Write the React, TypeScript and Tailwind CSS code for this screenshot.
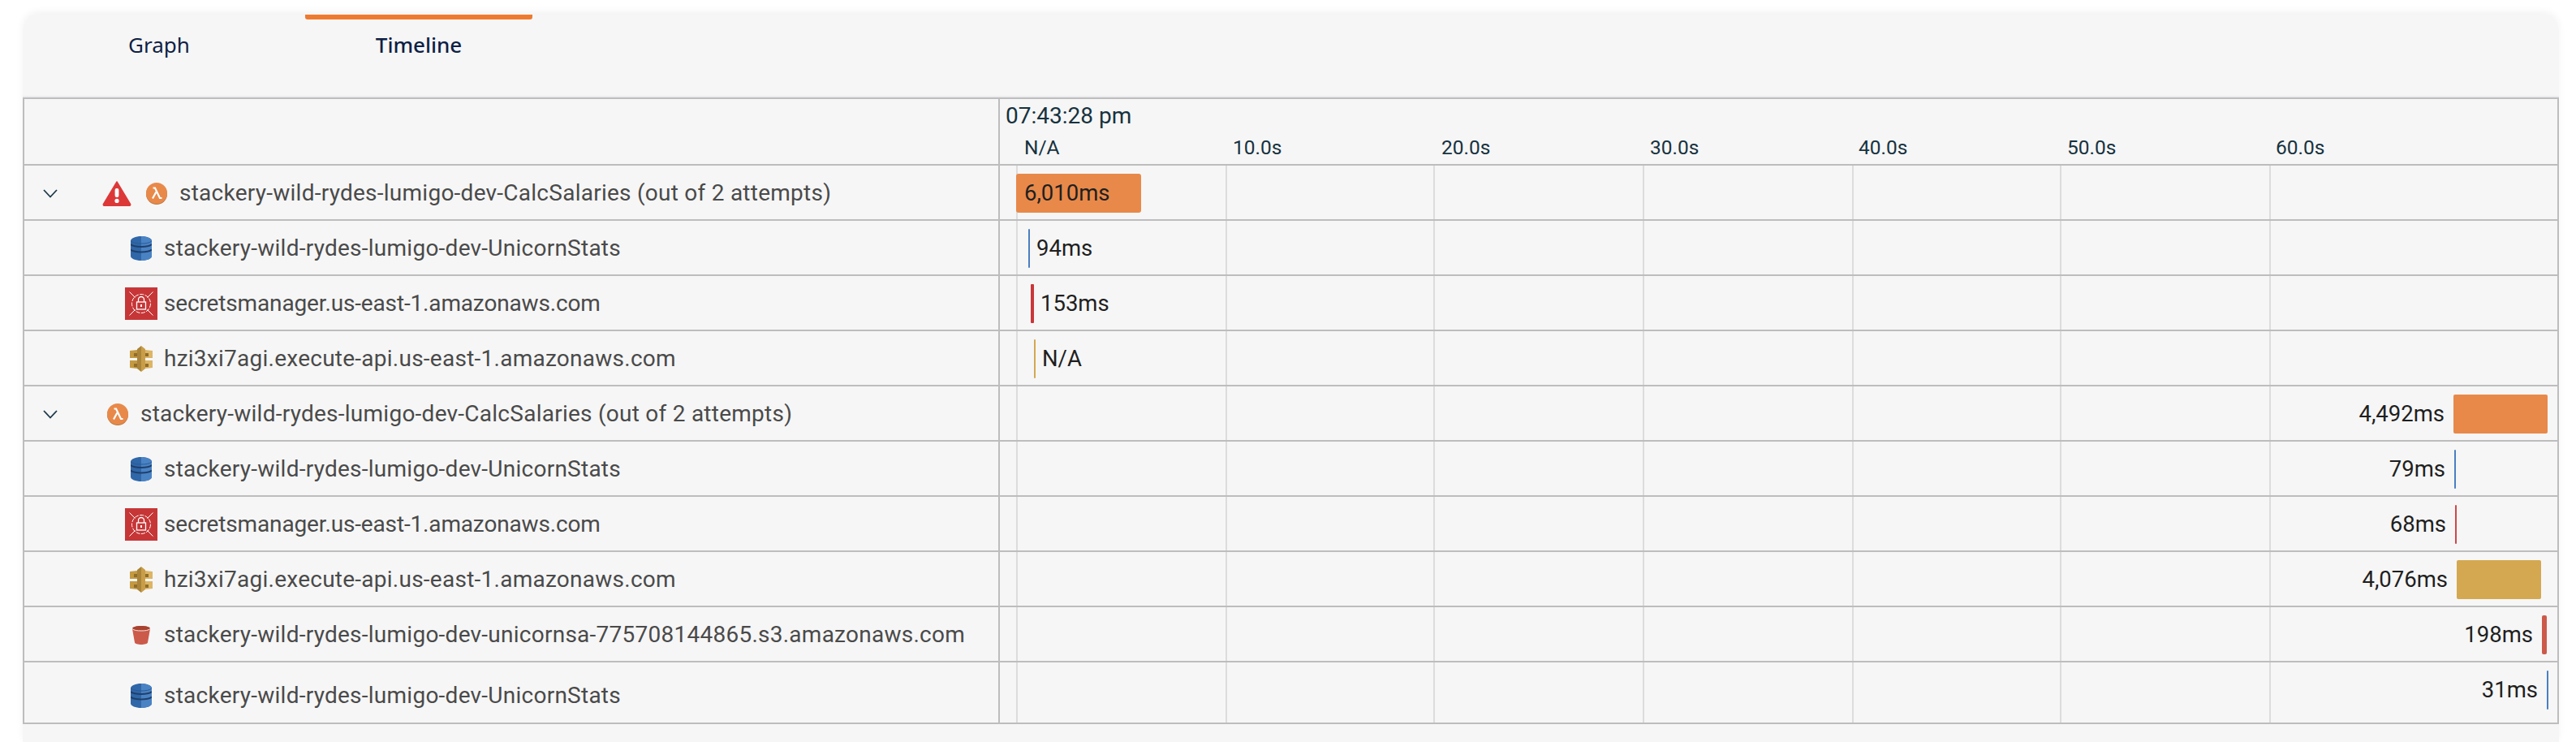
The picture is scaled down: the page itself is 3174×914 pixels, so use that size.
const GRID_OFFSETS = [20, 278, 534, 792, 1050, 1306, 1564];
const TICKS = ["N/A", "10.0s", "20.0s", "30.0s", "40.0s", "50.0s", "60.0s"];
const TRACK_LEFT = 1232;
const TRACK_RIGHT = 3151;

type Kind = "lambda" | "dynamo" | "secrets" | "api" | "s3";

type Span = {
  kind: Kind;
  name: string;
  top?: boolean;
  error?: boolean;
  x: number;
  width: number;
  color: string;
  label: string;
  side: "inside" | "after" | "before";
  tall?: boolean;
};

const BLUE = "#4a7fc1";
const RED = "#c9363a";
const GOLD = "#d3a851";
const ORANGE = "#e8894a";

const SPANS: Span[] = [
  { kind: "lambda", name: "stackery-wild-rydes-lumigo-dev-CalcSalaries (out of 2 attempts)", top: true, error: true, x: 1252, width: 154, color: ORANGE, label: "6,010ms", side: "inside" },
  { kind: "dynamo", name: "stackery-wild-rydes-lumigo-dev-UnicornStats", x: 1267, width: 2, color: BLUE, label: "94ms", side: "after" },
  { kind: "secrets", name: "secretsmanager.us-east-1.amazonaws.com", x: 1270, width: 4, color: RED, label: "153ms", side: "after" },
  { kind: "api", name: "hzi3xi7agi.execute-api.us-east-1.amazonaws.com", x: 1274, width: 2, color: GOLD, label: "N/A", side: "after" },
  { kind: "lambda", name: "stackery-wild-rydes-lumigo-dev-CalcSalaries (out of 2 attempts)", top: true, x: 3023, width: 116, color: ORANGE, label: "4,492ms", side: "before" },
  { kind: "dynamo", name: "stackery-wild-rydes-lumigo-dev-UnicornStats", x: 3024, width: 2, color: BLUE, label: "79ms", side: "before" },
  { kind: "secrets", name: "secretsmanager.us-east-1.amazonaws.com", x: 3025, width: 2, color: "#d0474a", label: "68ms", side: "before" },
  { kind: "api", name: "hzi3xi7agi.execute-api.us-east-1.amazonaws.com", x: 3027, width: 104, color: GOLD, label: "4,076ms", side: "before" },
  { kind: "s3", name: "stackery-wild-rydes-lumigo-dev-unicornsa-775708144865.s3.amazonaws.com", x: 3132, width: 6, color: "#cc5a4a", label: "198ms", side: "before" },
  { kind: "dynamo", name: "stackery-wild-rydes-lumigo-dev-UnicornStats", x: 3138, width: 2, color: BLUE, label: "31ms", side: "before", tall: true },
];

function Chevron() {
  return (
    <svg width="18" height="11" viewBox="0 0 18 11" fill="none" className="shrink-0">
      <path d="M1 1l8 8.5L17 1" stroke="#1f3a4a" strokeWidth="1.8" />
    </svg>
  );
}

function Warning() {
  return (
    <svg width="36" height="32" viewBox="0 0 36 32" className="shrink-0">
      <path d="M18 2L34.5 29.5a1.2 1.2 0 0 1-1 1.8H2.5a1.2 1.2 0 0 1-1-1.8z" fill="#dd3838" stroke="#dd3838" strokeWidth="1.5" strokeLinejoin="round" />
      <rect x="15.6" y="10" width="4.8" height="11" rx="2" fill="#fff" />
      <circle cx="18" cy="25.4" r="2.6" fill="#fff" />
    </svg>
  );
}

function LambdaIcon() {
  return (
    <svg width="26" height="27" viewBox="0 0 26 27" className="shrink-0">
      <circle cx="13" cy="14" r="13" fill="#b9763f" />
      <circle cx="13" cy="13" r="13" fill="#e8894a" />
      <path d="M8.5 6.5h2.5l6 12.5h2.500M12.400 11.500L8 19.500" fill="none" stroke="#fff" strokeWidth="2.2" />
    </svg>
  );
}

function DynamoIcon() {
  return (
    <svg width="26" height="30" viewBox="0 0 26 30" className="shrink-0">
      <path d="M13 0c7 0 13 2.500 13 5.500v19c0 3-6 5.500-13 5.500S0 27.500 0 24.500v-19C0 2.500 6 0 13 0z" fill="#2f67a8" />
      <path d="M13 0c7 0 13 2.500 13 5.500v19c0 3-6 5.500-13 5.500z" fill="#4a83c4" />
      <path d="M0 10c3 2.500 8 3 13 3s10-.5 13-3M0 16.500c3 2.500 8 3 13 3s10-.5 13-3" fill="none" stroke="#1f3f6b" strokeWidth="2" />
      <path d="M0 6c3 2.500 8 3 13 3s10-.5 13-3" fill="none" stroke="#2a5a96" strokeWidth="1" />
    </svg>
  );
}

function SecretsIcon() {
  return (
    <div className="flex h-[40px] w-[40px] shrink-0 items-center justify-center bg-[#c73637]">
      <svg width="32" height="32" viewBox="0 0 32 32" fill="none" stroke="#fff">
        <circle cx="16" cy="16" r="11.500" strokeWidth="1" strokeDasharray="5 1.500" />
        <path d="M1.500 1.500l7 7M30.500 1.500l-7 7M1.500 30.500l7-7M30.500 30.500l-7-7" strokeWidth="1" />
        <rect x="10.500" y="14" width="11" height="9" strokeWidth="1.300" />
        <path d="M12.500 14v-3a3.500 3.500 0 0 1 7 0v3" strokeWidth="1.300" />
        <rect x="15" y="17" width="2" height="3" fill="#fff" stroke="none" />
      </svg>
    </div>
  );
}

function ApiIcon() {
  return (
    <svg width="28" height="32" viewBox="0 0 28 32" className="shrink-0">
      <path d="M0 6l9-1v10H0zM0 18h9v10l-9-1z" fill="#c4993f" />
      <path d="M28 6l-9-1v10h9zM28 18h-9v10l9-1z" fill="#dcb565" />
      <path d="M5 9h4v4H5zM5 22h4v4H5zM19 9h4v4h-4zM19 22h4v4h-4z" fill="#8f6d2a" />
      <path d="M14 0l-5 4v24l5 4z" fill="#a9843a" />
      <path d="M14 0l5 4v24l-5 4z" fill="#c99d48" />
    </svg>
  );
}

function BucketIcon() {
  return (
    <svg width="22" height="23" viewBox="0 0 22 23" className="shrink-0">
      <path d="M0 3.500c0-2 5-3.500 11-3.500s11 1.500 11 3.500L19 20.500c-.3 1.500-4 2.500-8 2.500s-7.700-1-8-2.500z" fill="#cc5a4a" />
      <path d="M0 3.500c0-2 5-3.500 11-3.500s11 1.500 11 3.500C20 5.500 16 5.500 11 5.500S2 5.500 0 3.500z" fill="#a8432f" />
      <path d="M0 3.500C2 5.500 6 6 11 6s9-.5 11-2.500" fill="none" stroke="#f7e3de" strokeWidth="1" />
    </svg>
  );
}

function SpanIcon({ kind }: { kind: Kind }) {
  if (kind === "lambda") return <LambdaIcon />;
  if (kind === "dynamo") return <DynamoIcon />;
  if (kind === "secrets") return <SecretsIcon />;
  if (kind === "api") return <ApiIcon />;
  return <BucketIcon />;
}

function GridLines() {
  return (
    <div className="pointer-events-none absolute inset-0">
      {GRID_OFFSETS.map((left) => (
        <div key={left} className="absolute top-0 bottom-0 w-[2px] bg-[#dcdcdc]" style={{ left }} />
      ))}
    </div>
  );
}

function Bar({ span }: { span: Span }) {
  if (span.side === "inside") {
    return (
      <div
        className="flex h-[48px] items-center rounded-[3px] pl-[10px] text-[27.5px] text-[#1f1f1f]"
        style={{ marginLeft: span.x - TRACK_LEFT, width: span.width, backgroundColor: span.color }}
      >
        {span.label}
      </div>
    );
  }
  if (span.side === "after") {
    return (
      <div className="flex h-[48px] items-center gap-[8px] text-[27.5px] text-[#1f1f1f]" style={{ marginLeft: span.x - TRACK_LEFT }}>
        <div className="h-full rounded-[1px]" style={{ width: span.width, backgroundColor: span.color }} />
        <span>{span.label}</span>
      </div>
    );
  }
  return (
    <div
      className="flex h-[48px] items-center justify-end gap-[11px] text-[27.5px] text-[#1f1f1f]"
      style={{ paddingRight: TRACK_RIGHT - (span.x + span.width) }}
    >
      <span>{span.label}</span>
      <div className="h-full rounded-[2px]" style={{ width: span.width, backgroundColor: span.color }} />
    </div>
  );
}

function Row({ span }: { span: Span }) {
  return (
    <div className={`flex border-t-2 border-[#bdbdbd] ${span.tall ? "h-[76px]" : "h-[68px]"}`}>
      <div
        className={`flex w-[1202px] shrink-0 items-center border-r-2 border-[#bdbdbd] text-[28px] text-[#4a4a4a] ${
          span.tall ? "pt-[8px]" : "pt-[2px]"
        } ${span.top ? "pl-[23px]" : ""} ${span.kind === "secrets" ? "tracking-[-0.15px]" : "tracking-[0.25px]"}`}
      >
        {span.top ? (
          <>
            <Chevron />
            <div className={`flex items-center ${span.error ? "ml-[55px] gap-[18px]" : "ml-[61px]"}`}>
              {span.error && <Warning />}
              <div className="flex items-center gap-[15px]">
                <SpanIcon kind={span.kind} />
                <span className="whitespace-nowrap">{span.name}</span>
              </div>
            </div>
          </>
        ) : (
          <>
            <div className="mr-[4px] ml-[120px] flex w-[48px] shrink-0 justify-center">
              <SpanIcon kind={span.kind} />
            </div>
            <span className="whitespace-nowrap">{span.name}</span>
          </>
        )}
      </div>
      <div className="relative flex-1 pt-[10px]">
        <GridLines />
        <div className="relative">
          <Bar span={span} />
        </div>
      </div>
    </div>
  );
}

export default function App() {
  return (
    <div className="h-[914px] overflow-hidden bg-white pt-[18px] pr-[21px] pl-[28px] font-['Roboto',sans-serif]">
      <div className="h-[896px] rounded-t-[20px] bg-[#f6f6f6] shadow-[0_-4px_10px_rgba(0,0,0,0.05)]">
        <div className="flex h-[102px] gap-[40px] border-b-2 border-[#ebebef] pl-[28px] font-['Noto_Sans',sans-serif] text-[26px] text-[#0f1f45]">
          <div className="flex w-[280px] flex-col items-center">
            <div className="h-[6px]" />
            <span className="mt-[12px]">Graph</span>
          </div>
          <div className="flex w-[280px] flex-col items-center">
            <div className="h-[6px] w-full rounded-b-[3px] bg-[#ee7a30]" />
            <span className="mt-[12px] font-medium">Timeline</span>
          </div>
        </div>
        <div className="border-x-2 border-b-2 border-[#bdbdbd] bg-[#f6f6f6]">
          <div className="flex h-[82px] border-t-2 border-[#bdbdbd] text-[#17323f]">
            <div className="w-[1202px] shrink-0 border-r-2 border-[#bdbdbd]" />
            <div className="flex flex-1 flex-col">
              <div className="pt-[5px] pl-[7px] text-[28px] leading-[32px]">07:43:28 pm</div>
              <div className="mt-[10px] flex pl-[30px] text-[24.5px] leading-[26px]">
                {TICKS.map((tick) => (
                  <span key={tick} className="w-[257px] shrink-0">
                    {tick}
                  </span>
                ))}
              </div>
            </div>
          </div>
          {SPANS.map((span, i) => (
            <Row key={i} span={span} />
          ))}
        </div>
      </div>
    </div>
  );
}
